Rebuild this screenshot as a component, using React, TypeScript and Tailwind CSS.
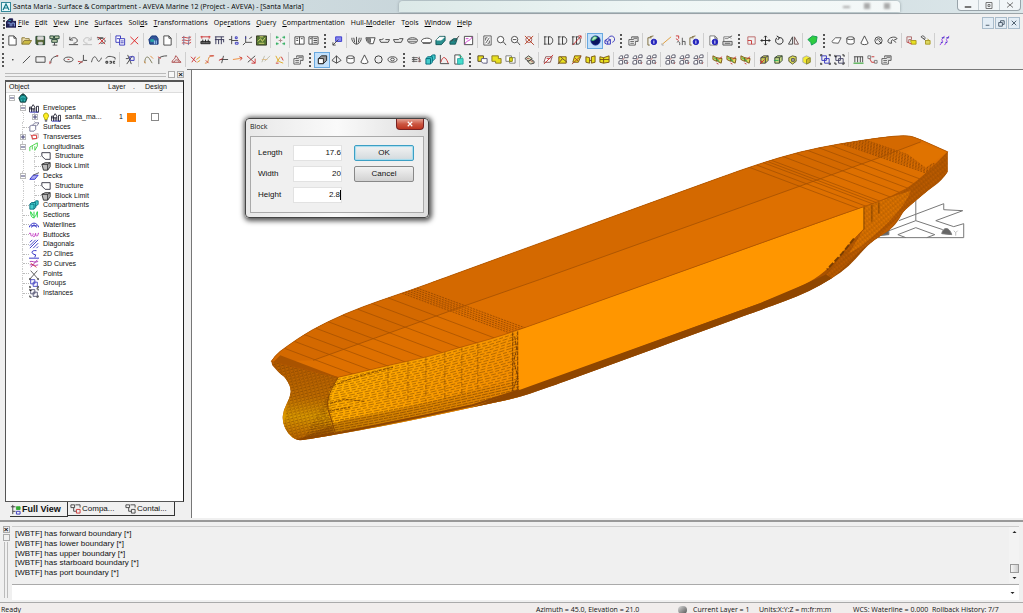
import type { ReactNode } from "react";

// [path, stroke, fill]
type Shape = [string, string?, string?];

const K = "#444";
const R = "#c33";
const B = "#33b";
const Y = "#e8e020";
const G = "#2a5";
const T = "#2aa5a5";

const box = "M3 5 L6 3 H11 V8 L8 11 H3 Z M3 5 H8 V11 M8 5 L11 3";
const grid = "M2 5 L4 3 H6 V6 H2 Z M8 4 L9 2 H12 V5 H8 Z M2 9 L4 8 H6 V12 H2 Z M8 8 H11 V11 H8 Z";
const squares = "M3 3 H8 V8 H3 Z M6 6 H11 V11 H6 Z";
const page = "M3 2 H8.500 L11 4.500 V12 H3 Z M8.500 2 V4.500 H11";

const ICONS: Record<string, Shape[]> = {
    new: [[page, K, "#fff"]],
    open: [["M2 11 V4 H5 L6 5 H10 V7", "#873", "#eda"], ["M2 11 L4.500 7 H12.500 L10 11 Z", "#873", "#cb4"]],
    save: [["M2 2.500 H11.500 V11.500 H3 L2 10.500 Z", "#243", "#563"], ["M4 3 H10 V6 H4 Z M5 9 H9 V11 H5 Z", "#ccc", "#ddd"]],
    saveAll: [["M2 2 H6 V5 H2 Z M7 2 H12 V5 H7 Z M4 6 H10 V9 H4 Z", "#243", "#bca"], ["M7 9 V12 M5 12 H10", K]],
    undo: [["M3 3 V6.500 H6.500 M3 6.500 C6 2 12 4 11 8 C10.500 9 9 10 7 10 M2 11.500 H12", K]],
    redo: [["M11 3 V6.500 H7.500 M11 6.500 C8 2 2 4 3 8 C4 9.500 5 10 7 10 M2 11.500 H12", "#bbb"]],
    undoX: [["M2 4 H9 M3 6.500 C5 3 11 5 11 8 C10 10 8 10 6 10", K], ["M3 3 L11 11 M11 4 L4 11", R]],
    copy: [["M2 2 H7 V9 H2 Z M3 5 H6", B, "#fff"], ["M6 5 H11.500 V12 H6 Z M7 7.500 H10.500 M7 9.500 H10.500", B, "#fff"]],
    del: [["M2.500 3 L11 11 M11 3 L3 11.500", "#d22"]],
    app: [["M2 6 L5 2 H10 L12 5 V11 H3 Z", "#137", "#359"], ["M4 6 H7 V8 H4 Z", T, T], ["M8 7 V11 M10 7 V11", "#adf"]],
    menuApp: [["M1 6 L5 2 H9 V5 H13 V12 H1 Z", "#114", "#225"], ["M3 7 H6 V11 M8 11 V7 H11 V11", "#9bf"], ["M4 4 H7", T]],
    hatch: [["M2 4 C5 2 8 6 12 3 M2 7 C5 5 8 9 12 6 M2 10 C5 8 8 12 12 9", R], ["M4 2 V12 M10 2 L9 12", "#779"]],
    ruler: [["M1.500 3 H12.500 M3 2 V5 M11 2 V5", R], ["M2 8 H12 V10.500 H2 Z M4 6 V9 M7 6 V9 M10 6 V9", "#222", "#666"]],
    comb: [["M2 3 H12 M2 6 H12 M3 3 V11 M6 6 V11 M9 3 V11 M11.500 6 V9", "#335"]],
    nodes: [["M5 2 V11 M5 7 H12 M2 6 H5", K], ["M9 3 H11 V5 H9 Z M9 9 H12 V11 H9 Z", B]],
    axis: [["M5 2 V9 H12 M5 9 L2 12 M9 5 L12 3", K], ["M5 3 V5", B]],
    map: [["M1.500 2 H12.500 V12 H1.500 Z", "#332", "#573"], ["M3 8 L6 5 L8 8 L11 4 M4 10 H10 M5 3 H9", "#dd7"]],
    dots: [["M3 2 V5 M3 9 V12 M11 2 V5 M11 9 V12 M2 3.500 H5 M9 3.500 H12 M2 10.500 H5 M9 10.500 H12", G], ["M7 5 V9 M5 7 H9", "#a88"]],
    book: [["M2 3 H12 V11 H2 Z M7 3 V11 M3.500 5 H5.500 M3.500 7 H5.500 M8.500 5 H10.500", K, "#fff"]],
    report: [["M2 3 H12 V11 H2 Z M5.500 3 V11 M7 5 H11 M7 7 H11 M7 9 H11 M3 5 H5", K, "#fff"]],
    flag: [["M5 3 H11.500 V8 H5 Z", "#33c", "#88e"], ["M2 12 L8 6 M2 9 V12 H5", K]],
    hull1: [["M2 4 V6 C3 9 5 11 7 11 C9 11 11 9 12 6 V4 M7 3 V11 M4 4 L5 9 M10 4 L9 9", K]],
    hull2: [["M2 4 L3 8 L6 10.500 H10 L12 4 Z", K, "#fff"], ["M3 5 H7 V9 H5 Z", "#666", "#888"]],
    hull3: [["M1.500 6 H4 L6 5 M8 6 H12.500 L11 9 H3 L1.500 6", K]],
    hull4: [["M1.500 6 L3 9 H10 L12 5 H8 L7 6 Z", K]],
    hull5: [["M1.500 7 C2 3 12 3 12.500 7 C12 11 2 11 1.500 7 Z", K, "#eee"], ["M1.500 6 H12.500 M2 8 H12", "#777"]],
    hull6: [["M1.500 8 C1 4 12 3 12.500 7 L12 9.500 H3 Z M3 10 H11", K, "#fff"]],
    cubeT: [["M2 7 L6 2.500 H12 V7 L8 11.500 H2 Z", "#155", "#2a9090"], ["M3 6.500 L6 3.500 H11 L8 6.500 Z", "#fff", "#fff"]],
    cubeT2: [["M2 8 L6 5 H10 L8 11 H2 Z", "#155", "#288"], ["M7 8 L12 2 M3 8 L6 6", K]],
    plotR: [["M2.500 2.500 H11.500 V11.500 H2.500 Z", K, "#fff"], ["M3 11 C5 6 8 9 11 3 M4 5 H7", "#c3c"]],
    fit: [["M3 2 H11 V12 H3 Z M5 4 H7 M9 10 H7 M5 10 L9 4 M5 7 L5 4 M9 7 V10", "#555", "#fff"]],
    zoom: [["M2.500 6 A3.500 3.500 0 1 1 9.500 6 A3.500 3.500 0 1 1 2.500 6 M9 8.500 L12 12", K, "#fff"]],
    zoomOut: [["M2.500 6 A3.500 3.500 0 1 1 9.500 6 A3.500 3.500 0 1 1 2.500 6 M9 8.500 L12 12 M4 6 H8", K, "#fff"]],
    zoomX: [["M3 6 A3 3 0 1 1 9.500 6 A3 3 0 1 1 3 6 M9 9 L12 12", "#a55"], ["M2 2 L11 11 M11 2 L2 11", "#b42"]],
    id: [["M3 3 V11 M2 3 H5 M2 11 H5 M7 3 V11 M6 3 H9 C12.500 4 12.500 10 9 11 H6", "#333"]],
    idR: [["M3 3 V11 M2 3 H5 M2 11 H5 M7 3 V11 M6 3 H9 C12 4 12 10 9 11 H6", "#333"], ["M3 12 L12 2 M9 2 H12 V5", R]],
    shade: [["M2 7 A5 5 0 1 1 12 7 A5 5 0 1 1 2 7", "#128", "#0a1560"], ["M3 6 C4 2 7 2 9 4 C7 5 7 7 3 7 Z", "#3b6", "#bfe8c8"]],
    wire: [["M2 7 L5 5 L8 6 V11 L4 11 L2 10 Z M2 7 L5 8 L8 6 M5 8 V11", B, "#dde"], ["M6 4 A3.500 3.500 0 1 1 10 9", B]],
    props: [["M2 6 H9 V12 H2 Z M3.500 8 H7.500 M3.500 10 H7.500", "#555", "#fff"], ["M5 3 H12 V8 H9 M5 3 V5 M7 4.500 H11", "#555", "#ddd"]],
    info: [["M2 4 H6 M2 4 V12 H4 M4 3 L8 2", "#763"], ["M5.500 8.500 A3 3 0 1 1 11.500 8.500 A3 3 0 1 1 5.500 8.500", "#22b", "#22b"], ["M8.500 7 V10.500", "#fff"]],
    infoPage: [[page, "#777", "#fff"], ["M5.500 8.500 A3 3 0 1 1 11.500 8.500 A3 3 0 1 1 5.500 8.500", "#22b", "#22b"], ["M8.500 7 V10.500", "#fff"]],
    printer: [["M3 9 V3 H9 L11 5 M4 5 H8", "#777", "#fff"], ["M2 8 H12 V12 H2 Z M4 10 H10 M8 4 L12 2", "#555", "#ddd"]],
    measure: [["M2.500 11 L12 3", "#d93"], ["M2 10 V12 H4", "#aaa"]],
    angle: [["M2 2 H5 V5 M2 5 L5 7", R], ["M3 9 C5 7 7 9 6 12 M9 4 V12 M9 8 H12 V12", "#555"]],
    scale: [["M3 3 H11 V11 H3 Z", "#b66"], ["M3 7 H7 V11", R]],
    move: [["M7 2 V12 M2 7 H12 M5.500 3.500 L7 2 L8.500 3.500 M5.500 10.500 L7 12 L8.500 10.500 M3.500 5.500 L2 7 L3.500 8.500 M10.500 5.500 L12 7 L10.500 8.500", "#222"]],
    rotate: [["M4 4 C1 8 4 11 7 11 C10 11 12 8 10 5 C9 4 7 3.500 6 4 M4 2 L7 4 L5 6.500", "#111"]],
    mirror: [["M6 3 V11 H1.500 Z", K], ["M8 3 V11 H12.500 Z", "#755"]],
    patch: [["M2 6 L7 2 L12 3 L11 9 L6 12 L5 9 Z", "#195", "#2ecc40"]],
    sheet: [["M2 8 L6 4 H12 L9 10 L3 9.500 Z", "#555", "#fff"]],
    cyl: [["M3 4.500 C3 2.500 11 2.500 11 4.500 V9.500 C11 11.500 3 11.500 3 9.500 Z M3 4.500 C3 6.500 11 6.500 11 4.500", "#444", "#fff"]],
    cone: [["M7 2 L3 10 C4 12 10 12 11 10 Z", "#444", "#fff"]],
    sphere: [["M3 7 A4 4 0 1 1 11 7 A4 4 0 1 1 3 7", "#333", "#eee"]],
    torus: [["M2 7 C2 3 12 3 12 7 C12 11 2 11 2 7 M5 7 C5 5 9 5 9 7 C9 9 5 9 5 7", K]],
    swirl: [["M3 7 A4 4 0 1 1 11 7 A4 4 0 1 1 3 7 M5 7 A2 2 0 1 1 9 7 M7 7 L10 10", K]],
    hook: [["M2 8 C2 3 11 2 12 5 L8 7 C7 5 5 7 6 10 C3 10 2 9 2 8 M9 8 L11 9", K]],
    clipY: [["M2 3 H7 V6 H4 V9 H2 Z", "#a66"], ["M6 7 H12 V11 H7 Z", "#a92", Y], ["M3 9 L7 11", R]],
    clipG: [["M2 3 A2.500 2.500 0 1 1 6 6 Z M4 4 L8 8", "#555"], ["M7 7 H12 V11 H7 Z M9 5 L11 7", "#a92", "#ddd860"]],
    zig: [["M2 12 L5 8 L4 6 L7 2 M7 12 L10 8 L9 6 L12 2", "#93e"], ["M4 4 H7 M3 9 H5 M9 4 H12 M8 9 H10", "#33b"]],
    dot: [["M6.500 7 H8 M6.500 7.500 H8", K]],
    line: [["M3 11 L11 3", K]],
    rect: [["M2 4 H12 V10 H2 Z", K]],
    arc: [["M3 11 C3 6 5 4 11 3", K], ["M2 9 V12 M9 3 H11", R]],
    ellipse: [["M2 7 C2 3.500 12 3.500 12 7 C12 10.500 2 10.500 2 7", K], ["M6 7 H8", R]],
    down: [["M8 2 V8 H12 M8 8 L3 12", K], ["M2 9 L7 10", R]],
    spline: [["M1.500 10 C4 0 7 5 8 8 C9 10 11 9 12.500 5", K]],
    text: [["M2 6 C4 2 9 4 12 5 V7", K], ["M2 9 H4 V11 H2 Z M6 9 H8 V11 H6 M10 9 H12 M10 9 V11 H12", "#222"]],
    cut: [["M5 2 L9 12 M10 3 L4 12 M3 6 H6", K], ["M7 4 H12 V8 H8 Z", B]],
    curveA: [["M3 11 C3 2 7 4 8 6 L11 11", "#775"], ["M2 9 L4 11 M9 3 L12 6", "#d83"]],
    curveB: [["M3 12 V6 C4 4 8 3 12 3", K], ["M2 4 L5 6", R]],
    curveC: [["M2 10 C3 6 5 8 6 3 C8 3 8 7 12 10 Z M4 10 C6 6 9 7 10 10", "#a44"]],
    x1: [["M2 4 L8 10 M7 4 L3 10", R], ["M8 7 L12 4 M9 10 L12 8", "#d92"]],
    x2: [["M2 11 C9 11 2 3 11 3", "#d83"], ["M7 3 H12 M3 8 L6 11", R]],
    x3: [["M3 7 H12 M7 3 L5 11", K], ["M2 8 L6 6", R]],
    x4: [["M2 7 L9 6 L12 5", "#e83"], ["M9 4 L12 5.500 L10 8", R]],
    x5: [["M2 3 L11 11 M11 6 V11 H7", R], ["M3 10 L11 3", K]],
    x6: [["M3 10 L6 3 M6 9 L12 3", "#bba"], ["M3 7 H9", "#db8"]],
    x7: [["M3 3 L6 9 L11 11 M4 10 L8 4", "#da2"], ["M9 4 L11 8 M3 11 H6", R]],
    block: [["M2.500 6 L6 3 H11.500 V8 L8 11.500 H2.500 Z", "#222", "#999"], ["M2.500 6 H8 V11.500 H2.500 Z", "#222", "#fff"]],
    prism: [["M7 3 L2 8 L7 11 L12 8 Z M7 3 V11", K, "#eee"]],
    planes: [["M2 5 H8 M2 7 H8 M2 9 H8 M4 4 V10 M10 4 V10", "#555"], ["M8 5 L12 8 M9 9 H12", "#855"]],
    cubeG: [["M6 5 L9 2 H12 V6 L9 9", "#067", "#4cc"], ["M2 6 L4 4 H9 V10 L7 12 H2 Z M2 6 H7 V12", "#067", "#4cc"]],
    graph: [["M2.500 2 V11.500 H12", K], ["M3 10 C5 3 8 3 11 11", R]],
    export: [["M3 2 H9 V12 H3 Z", K, "#fff"], ["M6 6 H12 V12 H6 Z", T, "#4dc"], ["M7 3 C10 2 11 4 11 6", "#2c9"]],
    boolA: [["M2 3 H8 V9 H2 Z", "#542", Y], ["M6 6 H12 V11 H8 C6 11 5 8 6 6", "#557", "#fff"]],
    boolB: [["M2 3 H9 V6 H12 V11 H6 V9 H2 Z", "#872", Y]],
    boolC: [["M2 3 H8 V9 H2 Z M6 5 H12 V11 H6 Z", "#777", "#fff"], ["M6 5 H9 V9 H6 Z", "#880", Y]],
    pieces: [["M2 6 L6 3 L10 6 L6 9 Z M5 9 L9 7 L12 9 V11 L8 12 Z", K, "#ddb"], ["M8 8 L11 10 M4 6 H7", "#a55"]],
    surfR: [["M4 4 H11 L9 10 H2 Z", "#855", "#fff"], ["M2 12 L12 2 M5 6 H9", R]],
    surfY: [["M3 4 H11 V11 H3 Z", "#751", Y], ["M2 12 L7 6 L5 4 M7 6 L12 10", "#643"]],
    surfY2: [["M5 3 H12 L9 10 H3 Z", "#751", Y], ["M2 12 L12 3 M5 5 L9 9", "#a43"]],
    surfY3: [["M2 4 L6 5 V11 L2 10 Z M8 4 L12 3 V10 L8 11 Z M6 8 H8", "#751", Y]],
    surfY4: [["M2 4 L6 5 L12 3 V10 L6 11 L2 10 Z M6 5 V11 M2 7 L12 7", "#751", Y]],
    mesh: [[grid, "#556", "#fff"], ["M6 7 L8 6 M11 12 L12 10", "#a55"]],
    panelY: [["M2 3 L6 5 V9 L2 7 Z M6 5 L12 6 L11 11 L7 9 Z", "#751", "#e3dc5c"], ["M3 5 L9 9", G], ["M8 7 L12 4 M6 11 L8 12", R]],
    solidR: [[box, K, "#cc5"], ["M2 12 L7 7 M2 8 L5 10", R]],
    solidG: [[box, "#343", "#cd8"], ["M2 8 H7", G]],
    solidB: [["M3 5 L7 3 L11 4 V9 L7 12 L3 9 Z", "#553", "#dd5"], ["M6 6 H9 V9 H6 Z", "#555", "#aaa"]],
    solidY: [["M3 5 L7 3 L11 5 V10 L7 12 L3 10 Z", "#aaa", "#f7ee30"], ["M7 7 V12 L11 10 V5 Z", "#882", "#cb3"]],
    group: [[squares, B], ["M1.500 2 H3.500 M10.500 2 H12.500 M1.500 12 H3.500 M10.500 12 H12.500 M2 1.500 V3.500 M12 1.500 V3.500 M2 10.500 V12.500 M12 10.500 V12.500", "#111"]],
    group2: [[squares, "#446"], ["M2 2 V4 H4 M10 2 H12 V4 M2 10 V12 H4 M10 12 H12 V10", "#111"]],
    cols: [["M3 4 V10 M6 4 V10 M9 4 V10 M2 4 H12 M11.500 4 V10", "#444"], ["M1.500 11 H12.500", "#191"]],
    link: [["M2 3 H5 V6 H2 Z M9 8 H12 V11 H9 Z", "#777"], ["M4 6 L6 10 H9 M6 4 H9", R]],
    // tree icons
    root: [["M2 7 L5 3 H9 L12 7 L10 12 H4 Z", "#022", "#188"], ["M4 7 C6 5 8 5 10 7 M5 9 V11 M9 9 V11", "#5cc"], ["M7 1 V4", "#022"]],
    env: [["M1.500 12 V6 H4 L6 3 L8 6 V12 M1.500 8 H8 M4 6 V12 M6 8 V12 M10 5 H12.500 V12 H10 Z", "#112"], ["M2 12 H12", B]],
    bulb: [["M4 6 C4 1 10 1 10 6 C10 7 8.500 8 8.500 10 H5.500 C5.500 8 4 7 4 6", "#990", "#ffee22"], ["M5.500 11.500 H8.500 M6 13 H8", "#223"]],
    treeSurf: [["M2 6 L4 5 H9 V10 L7 12 H2 Z M5 5 L8 2 H13 L10 6", "#668"]],
    trans: [["M2 4 L5 6 V10 L12 8 V3 L6 4", "#b99"], ["M4 5 H10 V9 H5 Z", "#d22"]],
    longi: [["M2 12 V7 L11 2 V6 L8 11 V6 M5 6 V10", "#3c3"]],
    deck: [["M2 11 L6 6 H12 L8 11 Z", "#22c", "#aae"], ["M6 6 L13 3", K]],
    struct: [["M2 3 H12 V11 H6 L2 7 Z", "#223"]],
    limit: [["M2 5 L6 3 H12 V8 L9 12 H4 Z M2 5 H9 V12 M9 5 L12 3", "#222", "#bbb"]],
    sect: [["M3 3 C3 12 8 13 11 3 M7 3 V11 M3 3 L6 8 M11 3 V10", "#0c2"]],
    water: [["M1 10 C4 3 10 3 13 10 M4 10 C6 6 8 6 10 10 M3 8 H11", "#11b"]],
    butt: [["M1 5 H3 C3 10 6 9 6 5 M6 9 C9 10 8 5 9 5 C9 10 12 9 12 5 H13", "#b2b"]],
    diag: [["M2 5 L5 2 M2 9 L9 2 M2 12 L12 2 M6 12 L12 6 M10 12 L12 10", "#22b"]],
    cline: [["M10 3 C3 2 3 7 9 8 L8 11", "#11b"], ["M1 12 H13", "#11b"]],
    curve3: [["M2 4 C6 3 7 6 12 4 M2 8 C6 7 7 10 12 8 M3 11 L11 2", "#a2a"], ["M3 6 L10 11", "#c33"]],
    point: [["M3 3 L11 12 M11 3 L3 12", "#444"]],
    views: [["M4 2 V12 M4 4 H7 M4 9 H7 M2 4 H5", K], ["M8 4 H12 V7 H8 Z", "#3a3", "#3a3"], ["M8 9 H12 V12 H8 Z", B]],
    viewsR: [["M2 3 H6 V6 H2 Z M5 6 V10 H8 M7 3 H12 V6", K], ["M8 8 H12 V12 H8 Z", R]],
    viewsK: [["M2 3 H6 V6 H2 Z M5 6 V10 H8 M7 3 H12 V6 M8 8 H12 V12 H8 Z", K]],
};

const Icon = ({ name, className = "size-3.5" }: { name: string; className?: string }) => (
    <svg viewBox="1 1 12 12" className={`${className} shrink-0`} aria-hidden="true">
        {ICONS[name].map(([d, stroke = K, fill = "none"], i) => (
            <path key={i} d={d} stroke={stroke} fill={fill} strokeWidth="1" />
        ))}
    </svg>
);

// "|" is a separator, "#" starts a new docked bar
const ROW_ONE =
    "# new open save saveAll | undo redo undoX | copy del | app new | hatch | ruler comb nodes axis map | dots | book report # flag | hull1 hull2 hull3 hull4 hull5 hull6 cubeT cubeT2 plotR | fit zoom zoomOut zoomX | id id idR | *shade wire # props | info measure angle info | infoPage printer # scale move rotate mirror | patch # sheet cyl cone swirl hook | clipY clipG | zig";
const ROW_TWO =
    "# dot line rect arc ellipse down spline text | cut | curveA curveB curveC | x1 x2 x3 x4 x5 x6 x7 | props # *block prism cyl cone sphere torus # planes cubeG graph export # boolA boolB boolC | pieces | surfR surfY surfY2 surfY3 surfY4 | mesh mesh mesh | mesh mesh mesh | panelY panelY panelY | solidR solidG solidB solidY | group group2 | cols link props";

const Toolbar = ({ items, label }: { items: string; label: string }) => (
    <div role="toolbar" aria-label={label} className="flex h-[19px] items-center overflow-hidden">
        {items.split(" ").map((item, i) => {
            if (item === "|") {
                return (
                    <span key={i} className="flex w-[5px] shrink-0 justify-center">
                        <span className="h-[15px] w-px bg-[#cfcfcf]" />
                    </span>
                );
            }
            if (item === "#") {
                return (
                    <span key={i} className={`flex shrink-0 justify-center ${i === 0 ? "w-[5px]" : "w-[10px]"}`}>
                        <span className="h-[14px] border-l-2 border-dotted border-[#555]" />
                    </span>
                );
            }
            const active = item.startsWith("*");
            const name = active ? item.slice(1) : item;
            return (
                <button
                    key={i}
                    type="button"
                    aria-label={name}
                    className={`flex size-3.5 shrink-0 items-center justify-center ${active ? "bg-[#c3e0fa] outline outline-[#69a9e0]" : ""}`}
                >
                    <Icon name={name} className="size-[11px]" />
                </button>
            );
        })}
    </div>
);

// underscore goes before the access key
const MENUS = ["_File", "_Edit", "_View", "_Line", "_Surfaces", "Soli_ds", "_Transformations", "Ope_rations", "_Query", "_Compartmentation", "Hull-_Modeller", "T_ools", "_Window", "_Help"];

const MenuBar = () => (
    <nav className="flex h-[17px] items-center px-[3px] font-['Open_Sans','Noto_Sans',sans-serif] text-[7px] text-black">
        <span className="mr-px h-3 border-l-2 border-dotted border-[#555]" />
        <Icon name="menuApp" className="size-[10px]" />
        <div className="ml-[2px] flex gap-[6px]">
            {MENUS.map((menu) => {
                const [head, tail] = menu.split("_");
                return (
                    <button key={menu} type="button" className="whitespace-nowrap">
                        {head}
                        <span className="underline">{tail[0]}</span>
                        {tail.slice(1)}
                    </button>
                );
            })}
        </div>
        <div className="ml-auto flex gap-px">
            {["M3 8 H7", "M3 5 H7 V9 H3 Z M5 5 V3 H9 V7 H7", "M3 3 L8 8 M8 3 L3 8"].map((d, i) => (
                <button key={d} type="button" aria-label={["Minimize view", "Restore view", "Close view"][i]} className="size-3 border border-[#a9bccb] bg-[#e3edf5]">
                    <svg viewBox="0 0 11 11" className="size-[10px]">
                        <path d={d} fill="none" stroke="#456" />
                    </svg>
                </button>
            ))}
        </div>
    </nav>
);

const TitleBar = () => (
    <header className="relative flex h-[14px] items-center border-b border-[#9ba4a8] bg-linear-to-r from-[#d9e4e7] via-[#c5d3d8] to-[#dce7ea] pl-px">
        <div className="absolute bottom-px left-[39%] right-[12%] top-px rounded-t-sm bg-linear-to-r from-[#dce9e8] via-[#eef6f5] to-[#f4f8f8] shadow-[0_0_3px_#8c999d]" />
        <div className="absolute right-[13%] top-[3px] flex gap-[14px] blur-[1px]">
            <span className="h-[5px] w-[7px] border-b-2 border-[#aaa]" />
            <span className="size-[6px] bg-[#aaa]" />
            <span className="size-[6px] bg-[#aaa]" />
        </div>
        <span className="flex size-[10px] items-center justify-center border border-[#389] bg-[#e6f8fb]">
            <svg viewBox="0 0 8 8" className="size-2">
                <path d="M1 7 L4 1 L7 7 M2.500 5 H5.500" fill="none" stroke="#178" strokeWidth="1.200" />
            </svg>
        </span>
        <h1 className="ml-[2px] whitespace-nowrap font-['Open_Sans','Noto_Sans',sans-serif] text-[7px] leading-[12px] text-black">
            Santa Maria - Surface &amp; Compartment - AVEVA Marine 12 (Project - AVEVA) - [Santa Maria]
        </h1>
        <div className="relative mr-[2px] ml-auto flex h-[11px] self-start rounded-b-sm border border-t-0 border-[#98a3a9] bg-[#f2f6f8]">
            {["M7 6.500 H13 V7.500 H7 Z", "M7 2.500 H13 V8.500 H7 Z M9 4.500 H11 V6.500 H9 Z", "M7 2.500 L13 7.500 M13 2.500 L7 7.500"].map((d, i) => (
                <button key={d} type="button" aria-label={["Minimize", "Restore", "Close"][i]} className="border-r border-[#c4cdd2] last:border-r-0">
                    <svg viewBox="0 0 20 10" className="h-[10px] w-5">
                        <path d={d} fill="none" stroke="#777" />
                    </svg>
                </button>
            ))}
        </div>
    </header>
);

interface ITreeRow {
    label: string;
    icon: string;
    level: number;
    toggle?: "+" | "-";
}

const TREE: ITreeRow[] = [
    { label: "", icon: "root", level: 0, toggle: "-" },
    { label: "Envelopes", icon: "env", level: 1, toggle: "-" },
    { label: "santa_ma...", icon: "env", level: 2, toggle: "+" },
    { label: "Surfaces", icon: "treeSurf", level: 1 },
    { label: "Transverses", icon: "trans", level: 1, toggle: "+" },
    { label: "Longitudinals", icon: "longi", level: 1, toggle: "-" },
    { label: "Structure", icon: "struct", level: 2 },
    { label: "Block Limit", icon: "limit", level: 2 },
    { label: "Decks", icon: "deck", level: 1, toggle: "-" },
    { label: "Structure", icon: "struct", level: 2 },
    { label: "Block Limit", icon: "limit", level: 2 },
    { label: "Compartments", icon: "cubeG", level: 1 },
    { label: "Sections", icon: "sect", level: 1 },
    { label: "Waterlines", icon: "water", level: 1 },
    { label: "Buttocks", icon: "butt", level: 1 },
    { label: "Diagonals", icon: "diag", level: 1 },
    { label: "2D Clines", icon: "cline", level: 1 },
    { label: "3D Curves", icon: "curve3", level: 1 },
    { label: "Points", icon: "point", level: 1 },
    { label: "Groups", icon: "group", level: 1 },
    { label: "Instances", icon: "group2", level: 1 },
];

const TreeRow = ({ row }: { row: ITreeRow }) => {
    const isEnvelope = row.label.startsWith("santa");
    return (
        <li className="flex min-h-0 items-center">
            {Array.from({ length: row.level }, (_, i) => (
                <span key={i} className={`flex shrink-0 justify-center self-stretch ${i === 0 ? "w-[11px]" : "w-3"}`}>
                    {i > 0 && <span className="border-l border-dotted border-[#ccc]" />}
                </span>
            ))}
            <span className="relative flex w-3 shrink-0 items-center justify-center self-stretch">
                {row.level > 0 && <span className="absolute inset-y-0 left-[5px] border-l border-dotted border-[#ccc]" />}
                {row.toggle ? (
                    <button type="button" aria-label={row.toggle === "+" ? "Expand" : "Collapse"} className="relative flex size-[6px] items-center justify-center border border-[#bbb] bg-white">
                        <svg viewBox="0 0 4 4" className="size-1">
                            <path d={row.toggle === "+" ? "M0 2 H4 M2 0 V4" : "M0 2 H4"} stroke="#447" strokeWidth="1" />
                        </svg>
                    </button>
                ) : (
                    <span className="ml-[6px] w-[6px] border-t border-dotted border-[#bbb]" />
                )}
            </span>
            {isEnvelope && <Icon name="bulb" className="size-[10px]" />}
            <Icon name={row.icon} className="size-[10px]" />
            <span className="ml-1 whitespace-nowrap">{row.label}</span>
            {isEnvelope && (
                <span className="ml-auto flex items-center pr-[24px]">
                    1
                    <span className="ml-[4px] size-[9px] bg-[#ff8000]" />
                    <input type="checkbox" aria-label="Design" className="ml-[15px] size-2 appearance-none border border-[#888] bg-white" />
                </span>
            )}
        </li>
    );
};

const ObjectPanel = () => (
    <aside className="flex w-[187px] shrink-0 flex-col pl-[5px] pr-[3px]">
        <div className="flex h-[11px] items-center gap-[2px]">
            <span className="h-1 flex-1 border-y border-[#bbb]" />
            <button type="button" aria-label="Pin" className="size-[7px] border border-[#aaa] bg-[#f8f8f8]" />
            <button type="button" aria-label="Close panel" className="size-[7px] border border-[#aaa] text-[8px] font-bold leading-[4px]">
                ×
            </button>
        </div>
        <div className="flex min-h-0 flex-1 flex-col border border-t-2 border-[#555] border-r-[#222] bg-white">
            <div className="flex h-[11px] shrink-0 items-center border-b border-[#ddd] bg-[#f5f5f5] pl-[3px]">
                <span className="flex-1">Object</span>
                <span className="w-[25px]">Layer</span>
                <span className="w-3">.</span>
                <span className="w-[38px]">Design</span>
            </div>
            <ul className="grid h-[205px] shrink-0 auto-rows-fr">
                {TREE.map((row, i) => (
                    <TreeRow key={i} row={row} />
                ))}
            </ul>
        </div>
        <div role="tablist" className="flex h-[18px] items-start pl-[5px] text-[8px]">
            <button type="button" role="tab" aria-selected="true" className="flex h-[15px] w-[58px] items-center gap-px border-b border-r border-[#333] text-[9px] font-bold">
                <Icon name="views" className="size-[11px]" />
                <span className="whitespace-nowrap">Full View</span>
            </button>
            <button type="button" role="tab" aria-selected="false" className="flex h-[14px] w-[55px] items-center gap-px border-b border-[#333] pl-[2px]">
                <Icon name="viewsR" className="size-[11px]" />
                Compa...
            </button>
            <button type="button" role="tab" aria-selected="false" className="flex h-[14px] w-[52px] items-center gap-px border-b border-r border-[#333] pl-[2px]">
                <Icon name="viewsK" className="size-[11px]" />
                Contai...
            </button>
        </div>
    </aside>
);

type Point = [number, number];

const DECK_TOP: Point[] = [[271, 362], [275, 356], [285, 348], [310, 331], [345, 314], [380, 301], [410, 291], [440, 280], [720, 178], [760, 164], [800, 152], [840, 144], [880, 138], [908, 135], [920, 139], [949, 152]];
const DECK_LOW: Point[] = [[338, 378], [360, 373], [393, 365], [430, 357], [460, 348], [490, 340], [517, 331], [540, 323], [830, 219], [865, 207], [893, 197], [920, 182], [949, 152]];
const CENTRE: Point[] = [[313, 361], [460, 308], [540, 280], [880, 158], [922, 142]];
const KEEL: Point[] = [[303, 441], [343, 434], [377, 428], [427, 418], [473, 408], [500, 402], [520, 398]];
const SIDE_TOP: Point[] = [[338, 378], [360, 373], [393, 365], [430, 357], [460, 348], [490, 340], [517, 331]];
const BOTTOM: Point[] = [
    [949, 172], [943, 181], [930, 190], [917, 201], [904, 212], [901, 219], [892, 230], [875, 240], [863, 252], [850, 267], [833, 279], [810, 292], [785, 302], [760, 311],
    [560, 384], [540, 391], [520, 398], [473, 408], [427, 418], [377, 428], [343, 434], [303, 441], [296, 441], [288, 435], [282, 423], [283, 411], [290, 398], [291, 388], [284, 377], [280, 375], [272, 366],
];

const toPath = (points: Point[]) => "M" + points.map((p) => p.join(" ")).join(" L");

const blend = (a: Point[], b: Point[], t: number): Point[] =>
    a.map(([x, y], i) => [Math.round((x + (b[i][0] - x) * t) * 10) / 10, Math.round((y + (b[i][1] - y) * t) * 10) / 10]);

// rounds each corner off between the midpoints of its two edges
const smooth = (points: Point[], start = "M") => {
    let d = `${start}${points[0].join(" ")}`;
    for (let i = 1; i < points.length - 1; i++) {
        const [x, y] = points[i];
        const [nx, ny] = points[i + 1];
        d += ` Q${x} ${y} ${(x + nx) / 2} ${(y + ny) / 2}`;
    }
    return `${d} L${points[points.length - 1].join(" ")}`;
};

const OUTLINE = `${smooth(DECK_TOP)} ${smooth(BOTTOM, "L")} Z`;
const DECK = `${smooth(DECK_TOP)} ${smooth([...DECK_LOW].reverse(), "L")} Z`;
const FLAT_SIDE = "M517 331 L865 207 V229 Q848 246 843 254 C834 266 818 279 805 285 Q790 293 760 304 L519 392 Z";

const deckLines = [284, 294, 304, 315, 328, 342, 357, 372, 388, 750, 757, 764, 768, 772, 784, 796, 808, 820, 832];
const denseLines = [402, 405, 408, 411, 414, 417, 842, 845, 848, 851, 854, 857, 860, 863, 866];

const topAt = (x: number) => {
    const i = Math.max(1, DECK_TOP.findIndex((p) => p[0] >= x));
    const [x0, y0] = DECK_TOP[i - 1];
    const [x1, y1] = DECK_TOP[i];
    return y0 + ((y1 - y0) * (x - x0)) / (x1 - x0);
};

const Ship = () => (
    <svg viewBox="193 70 830 449" preserveAspectRatio="xMidYMid meet" className="h-full w-full" role="img" aria-label="Hull model">
        <defs>
            <clipPath id="deck">
                <path d={DECK} />
            </clipPath>
            <clipPath id="hull">
                <path d={OUTLINE} />
            </clipPath>
            <linearGradient id="bow" x1="0" x2="1" y1="0" y2="0.250">
                <stop offset="0" stopColor="#e8a000" />
                <stop offset="0.300" stopColor="#ffae00" />
                <stop offset="1" stopColor="#f48e00" />
            </linearGradient>
            <linearGradient id="nose" x1="0" x2="0" y1="0" y2="1">
                <stop offset="0" stopColor="#b85c00" />
                <stop offset="0.450" stopColor="#bf6c00" />
                <stop offset="0.700" stopColor="#dc9a00" />
                <stop offset="1" stopColor="#b86000" />
            </linearGradient>
            <linearGradient id="bilge" x1="0" x2="0" y1="0" y2="1">
                <stop offset="0" stopColor="#8a4600" stopOpacity="0" />
                <stop offset="1" stopColor="#7a3c00" stopOpacity="0.900" />
            </linearGradient>
            <pattern id="mesh" width="4" height="3" patternUnits="userSpaceOnUse" patternTransform="rotate(-14)">
                <path d="M0 0.500 H3 M2 2 H4" stroke="#6b3800" strokeWidth="0.600" opacity="0.750" />
            </pattern>
            <pattern id="sternMesh" width="3" height="4" patternUnits="userSpaceOnUse" patternTransform="rotate(-38)">
                <path d="M0 1 H2 M1 3 H3 M2 0 V2" stroke="#6b3500" strokeWidth="0.600" opacity="0.600" />
            </pattern>
        </defs>

        <g fill="none" stroke="#777">
            <path d="M917 195 V221 L885 233 M917 221 L944 230 M900 221 L945 204 V210 L964 211 L937 221 L955 227 L965 224 V238 H875 M899 235 L917 228 L936 235 L928 238 M899 235 L907 238" />
            <path d="M943 234 C944 228 950 226 953 235 Z M880 236 L890 230 V235 Z" fill="#666" />
            <path d="M955 231 L957 233 L959 231 M957 233 V236" stroke="#bbb" />
        </g>

        <path d={OUTLINE} fill="#a85100" />
        <g clipPath="url(#hull)">
            <path d={FLAT_SIDE} fill="#ff9600" />
            <path d="M338 378 L393 365 L460 348 L519 330 V400 L460 412 L390 426 L303 441 L285 438 L312 400 Z" fill="url(#bow)" />
            <path d="M271 362 L338 378 L329 393 L327 412 L335 437 L296 441 L283 430 L282 411 L290 389 Z" fill="url(#nose)" />
            <path d="M865 207 L893 197 L949 152 V174 L905 212 L890 231 L865 248 L833 279 L812 288 Q832 274 843 254 Q848 246 865 229 Z" fill="#bd5c00" />
            <path d="M865 207 L893 197 L912 191 Q905 212 862 247 L850 254 L865 229 Z" fill="#e07500" />
            <path d="M865 207 L893 197 L949 152 V174 L905 212 L862 255 L833 281 L805 292 Q832 274 843 254 Q848 246 865 229 Z" fill="url(#sternMesh)" />
            <path d="M271 362 L338 378 L329 393 L335 434 L296 441 L283 430 L290 389 Z" fill="url(#mesh)" />
            {Array.from({ length: 24 }, (_, i) => (
                <path
                    key={i}
                    d={toPath(blend(SIDE_TOP, KEEL, (i + 1) / 25))}
                    fill="none"
                    stroke="#7a4300"
                    strokeWidth={i > 17 ? 0.9 : 0.7}
                    strokeDasharray={`${4 + (i % 3)} ${i > 17 ? 1 : 2}`}
                    strokeDashoffset={i * 2}
                    opacity={0.75}
                />
            ))}
            <path d="M296 441 L343 421 L390 412 L440 400 L490 386 L519 378 V400 L473 408 L377 428 L303 443 Z" fill="url(#bilge)" opacity="0.600" />
            <path d="M330 388 Q350 378 393 368 M330 404 L345 400 L364 402 M328 412 L350 408" fill="none" stroke="#7a4300" strokeWidth="0.900" strokeDasharray="3 1" />
            <path d="M388 367 V400 M408 361 V401 M426 357 V402 M445 352 V399 M462 348 V396 M478 344 V389" stroke="#8a4b00" strokeWidth="0.600" strokeDasharray="5 2" />
            <path d="M513 333 V392 M518 332 V390 M515 337 L517 350 L514 362 L518 377 L514 388" fill="none" stroke="#703800" strokeWidth="0.900" strokeDasharray="4 1" />
            <path d="M338 378 C331 390 326 398 328 410 L335 433" fill="none" stroke="#8a4700" />
            <path d="M519 391 L760 304 L805 285 L827 275 L833 279 L810 293 L760 312 L520 399 L470 409 Z" fill="#8f4600" />
            <path d="M296 441 L343 433 L427 416 L473 406 L519 391" fill="none" stroke="#8f4600" strokeWidth="2" />
            <path d="M865 207 V230 M873 205 V222 M880 203 V214" stroke="#703800" strokeWidth="0.800" />
            <path d="M855 239 L843 254 L828 270" fill="none" stroke="#7a3d00" strokeWidth="2" strokeDasharray="6 2" />
        </g>

        <path d={DECK} fill="#de7000" />
        <g clipPath="url(#deck)">
            <path d={toPath([[271, 362], ...CENTRE, [949, 130], [271, 130]])} fill="#d46900" />
            <path d="M272 364 L280 356 L338 378 L280 375 Z" fill="#a95300" />
            {deckLines.map((x) => (
                <path key={x} d={`M${x} ${topAt(x)} l130 49`} stroke="#974a00" strokeWidth="0.600" />
            ))}
            {denseLines.map((x) => (
                <path key={x} d={`M${x} ${topAt(x)} l130 ${x > 800 ? 45 : 48}`} stroke="#7d3d00" strokeWidth="0.800" strokeDasharray="2 1" opacity="0.800" />
            ))}
            <path d="M907 153 L919 143 L949 152 L927 168 Z" fill="#e07300" />
            <path d={toPath(CENTRE)} fill="none" stroke="#a45000" strokeWidth="0.800" />
        </g>
        <path d={DECK} fill="none" stroke="#a85200" strokeWidth="0.700" />
    </svg>
);

const FIELDS = [
    { label: "Length", value: "17.6" },
    { label: "Width", value: "20" },
    { label: "Height", value: "2.8" },
];

const BlockDialog = () => (
    <section
        role="dialog"
        aria-labelledby="block-title"
        className="absolute left-[53px] top-[48px] w-[184px] rounded-[4px] border border-[#444] bg-linear-to-r from-[#e8e8e8] via-[#fafafa] to-[#dedede] px-1 pb-1 text-[8px] shadow-[1px_1px_5px_2px_#555]"
    >
        <div className="flex h-[17px] items-start justify-between">
            <h2 id="block-title" className="pt-[3px] font-['Open_Sans','Noto_Sans',sans-serif] text-[7px] leading-[10px]">
                Block
            </h2>
            <button type="button" aria-label="Close" className="flex h-[11px] w-[28px] items-center justify-center rounded-b-sm border border-t-0 border-[#722] bg-linear-to-b from-[#e3a193] via-[#cb5540] to-[#bd3520]">
                <svg viewBox="0 0 8 8" className="size-[6px]">
                    <path d="M1 1 L7 7 M7 1 L1 7" stroke="#fff" strokeWidth="1.500" />
                </svg>
            </button>
        </div>
        <form className="flex h-[77px] justify-between border border-[#aaa] bg-[#f0f0f0] pb-[9px] pl-[7px] pr-[9px] pt-2">
            <div className="flex flex-col justify-between">
                {FIELDS.map(({ label, value }) => (
                    <div key={label} className="flex items-center">
                        <label htmlFor={label} className="w-[35px]">
                            {label}
                        </label>
                        <span className="flex h-4 w-[49px] items-start border border-[#e2e2e2] bg-white">
                            <input id={label} defaultValue={value} className="h-[13px] w-full min-w-0 text-right outline-none" />
                            {label === "Height" && <span className="mt-[2px] h-[10px] w-px shrink-0 bg-black" />}
                        </span>
                    </div>
                ))}
            </div>
            <div className="flex flex-col gap-[5px]">
                <button type="button" className="h-4 w-[60px] rounded-[2px] border border-[#3c9fc4] bg-linear-to-b from-[#f2f2f2] to-[#d3dadd] shadow-[inset_0_0_1px_1px_#a5dcef]">
                    OK
                </button>
                <button type="button" className="h-4 w-[60px] rounded-[2px] border border-[#888] bg-linear-to-b from-[#f2f2f2] to-[#d2d2d2]">
                    Cancel
                </button>
            </div>
        </form>
    </section>
);

const MESSAGES = ["forward", "lower", "upper", "starboard", "port"];

const Arrow = ({ up }: { up?: boolean }) => (
    <svg viewBox="0 0 5 4" className="h-1 w-[5px]">
        <path d={up ? "M0.500 3 L2.500 1 L4.500 3 Z" : "M0.500 1 L2.500 3 L4.500 1 Z"} fill="#222" />
    </svg>
);

const Console = () => (
    <section className="flex h-[82px] shrink-0 border-t-2 border-[#999] pt-1">
        <div className="flex w-3 shrink-0 flex-col items-center gap-px">
            <button type="button" aria-label="Close console" className="size-[7px] border border-[#aaa] text-[8px] font-bold leading-[4px]">
                ×
            </button>
            <button type="button" aria-label="Pin console" className="size-[7px] border border-[#aaa]" />
            <span className="mb-1 w-1 flex-1 border-x border-[#bbb]" />
        </div>
        <div className="mr-1 flex min-w-0 flex-1 flex-col">
            <div className="flex h-[57px] border-t border-[#ccc]">
                <div className="grid h-[51px] flex-1 auto-rows-fr pl-[3px] pt-[2px] text-[8px]">
                    {MESSAGES.map((side) => (
                        <p key={side} className="leading-[10px]">
                            [WBTF] has {side} boundary [*]
                        </p>
                    ))}
                </div>
                <div className="flex w-[10px] flex-col items-center justify-between bg-[#f3f3f3] py-[3px]">
                    <Arrow up />
                    <span className="mb-[3px] mt-auto size-[9px] border border-[#999] bg-linear-to-r from-[#f6f6f6] to-[#cfcfcf]" />
                    <Arrow />
                </div>
            </div>
            <div className="mt-px flex h-4 items-center border-t border-[#aaa] bg-white pr-1">
                <input aria-label="Command" className="h-3 flex-1 text-[8px] outline-none" />
                <Arrow />
            </div>
        </div>
    </section>
);

const StatusItem = ({ children, className }: { children: ReactNode; className: string }) => (
    <span className={`flex shrink-0 items-center whitespace-nowrap pt-[3px] ${className}`}>{children}</span>
);

const StatusBar = () => (
    <footer className="flex h-[11px] shrink-0 items-center overflow-hidden border-t border-[#aaa] bg-[#f1edec] pl-px font-['Open_Sans','Noto_Sans',sans-serif] text-[7px] leading-[14px]">
        <StatusItem className="">Ready</StatusItem>
        <StatusItem className="ml-auto w-[142px]">Azimuth = 45.0, Elevation = 21.0</StatusItem>
        <StatusItem className="w-[81px] gap-[6px]">
            <span className="h-2 w-[9px] rounded-sm bg-linear-to-br from-[#ddd] to-[#555]" />
            Current Layer = 1
        </StatusItem>
        <StatusItem className="w-[94px]">Units:X:Y:Z = m:fr:m:m</StatusItem>
        <StatusItem className="w-[79px]">WCS: Waterline = 0.000</StatusItem>
        <StatusItem className="w-[91px]">Rollback History: 7/7</StatusItem>
    </footer>
);

export default function App() {
    return (
        <div className="flex h-screen flex-col overflow-hidden bg-[#f0f0f0] font-['Liberation_Sans',Arial,sans-serif] text-[7px] leading-[10px] text-[#111]">
            <TitleBar />
            <MenuBar />
            <Toolbar items={ROW_ONE} label="Standard" />
            <Toolbar items={ROW_TWO} label="Geometry" />
            <main className="flex min-h-0 flex-1">
                <ObjectPanel />
                <div className="flex min-w-0 flex-1 flex-col border-t border-[#777] pb-[2px] pl-1">
                    <div className="relative min-h-0 flex-1 border-l border-[#777] bg-white">
                        <Ship />
                        <BlockDialog />
                    </div>
                </div>
            </main>
            <Console />
            <StatusBar />
        </div>
    );
}
